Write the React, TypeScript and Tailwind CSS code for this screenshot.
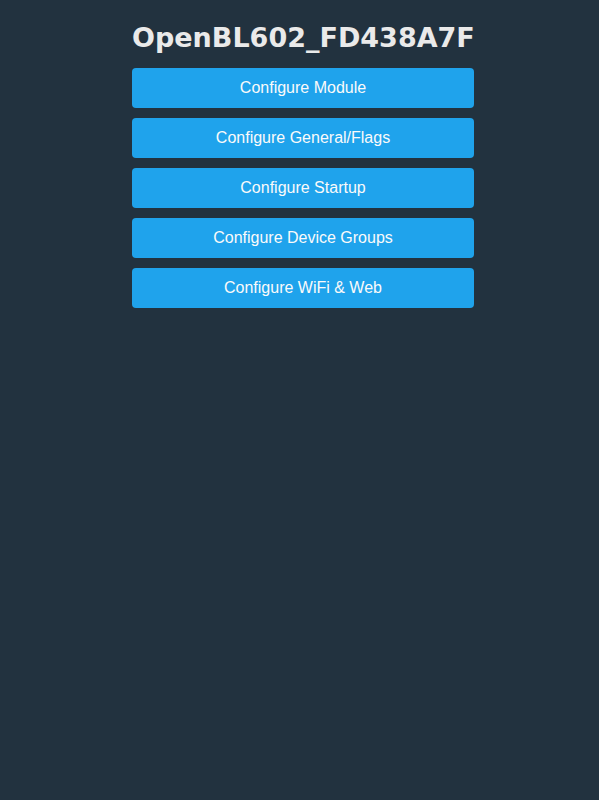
import React from 'react';

const items = [
  'Configure Module',
  'Configure General/Flags',
  'Configure Startup',
  'Configure Device Groups',
  'Configure WiFi & Web',
];

const App: React.FC = () => {
  return (
    <div className="min-h-[800px] bg-[#22323f] font-['Liberation_Sans',Arial,sans-serif]">
      <div className="ml-[132px] w-[342px] pt-[18px]">
        {/* Device name */}
        <h2 className="h-[40px] text-center font-['DejaVu_Sans',sans-serif] text-[27px] font-bold leading-[40px] text-[#eaeaea]">
          OpenBL602_FD438A7F
        </h2>
        <div className="mt-[10px] flex flex-col gap-[10px]">
          {items.map((label) => (
            <button
              key={label}
              className="h-[40px] w-full rounded-[4px] bg-[#1fa3ec] text-[16px] text-[#fafafa]"
            >
              {label}
            </button>
          ))}
        </div>
      </div>
    </div>
  );
};

export default App;
